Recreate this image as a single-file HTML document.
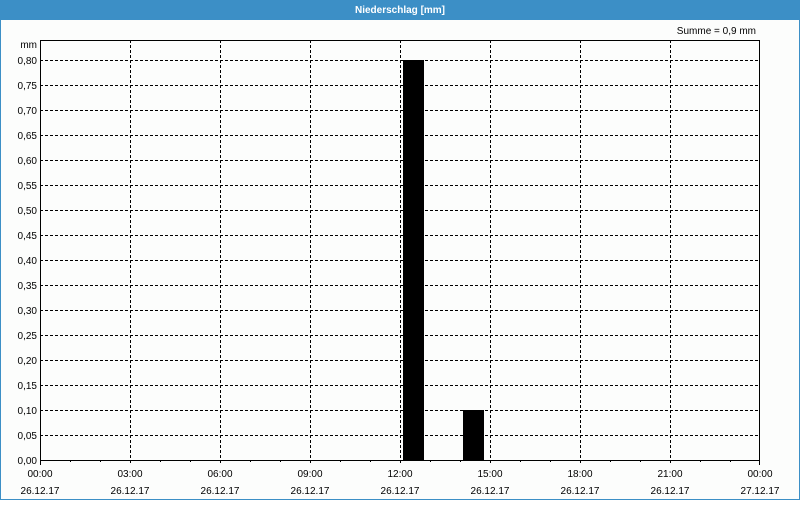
<!DOCTYPE html>
<html><head><style>
html,body{margin:0;padding:0;background:#fff;}
body{width:800px;height:500px;overflow:hidden;font-family:"Liberation Sans",sans-serif;}
</style></head><body>
<svg width="800" height="500" xmlns="http://www.w3.org/2000/svg" font-family="Liberation Sans, sans-serif" font-size="10">
<rect x="0" y="0" width="800" height="500" fill="#3c8fc6"/>
<rect x="1" y="20" width="798" height="479" fill="#fcfdfc"/>
<text x="400" y="13" fill="#fff" font-weight="bold" text-anchor="middle">Niederschlag [mm]</text>
<text x="756" y="34" fill="#000" text-anchor="end">Summe = 0,9 mm</text>
<text x="37" y="48" text-anchor="end">mm</text>
<g stroke="#000" stroke-dasharray="3,2" stroke-width="1">
<line x1="40" y1="60.5" x2="760" y2="60.5"/><line x1="40" y1="85.5" x2="760" y2="85.5"/><line x1="40" y1="110.5" x2="760" y2="110.5"/><line x1="40" y1="135.5" x2="760" y2="135.5"/><line x1="40" y1="160.5" x2="760" y2="160.5"/><line x1="40" y1="185.5" x2="760" y2="185.5"/><line x1="40" y1="210.5" x2="760" y2="210.5"/><line x1="40" y1="235.5" x2="760" y2="235.5"/><line x1="40" y1="260.5" x2="760" y2="260.5"/><line x1="40" y1="285.5" x2="760" y2="285.5"/><line x1="40" y1="310.5" x2="760" y2="310.5"/><line x1="40" y1="335.5" x2="760" y2="335.5"/><line x1="40" y1="360.5" x2="760" y2="360.5"/><line x1="40" y1="385.5" x2="760" y2="385.5"/><line x1="40" y1="410.5" x2="760" y2="410.5"/><line x1="40" y1="435.5" x2="760" y2="435.5"/>
<line x1="130.5" y1="40" x2="130.5" y2="465"/><line x1="220.5" y1="40" x2="220.5" y2="465"/><line x1="310.5" y1="40" x2="310.5" y2="465"/><line x1="400.5" y1="40" x2="400.5" y2="465"/><line x1="490.5" y1="40" x2="490.5" y2="465"/><line x1="580.5" y1="40" x2="580.5" y2="465"/><line x1="670.5" y1="40" x2="670.5" y2="465"/>
</g>
<rect x="40.5" y="40.5" width="719" height="420" fill="none" stroke="#000"/>
<g stroke="#000"><line x1="40.5" y1="460" x2="40.5" y2="465"/><line x1="759.5" y1="460" x2="759.5" y2="465"/>
<line x1="70.5" y1="460" x2="70.5" y2="462"/><line x1="100.5" y1="460" x2="100.5" y2="462"/><line x1="160.5" y1="460" x2="160.5" y2="462"/><line x1="190.5" y1="460" x2="190.5" y2="462"/><line x1="250.5" y1="460" x2="250.5" y2="462"/><line x1="280.5" y1="460" x2="280.5" y2="462"/><line x1="340.5" y1="460" x2="340.5" y2="462"/><line x1="370.5" y1="460" x2="370.5" y2="462"/><line x1="430.5" y1="460" x2="430.5" y2="462"/><line x1="460.5" y1="460" x2="460.5" y2="462"/><line x1="520.5" y1="460" x2="520.5" y2="462"/><line x1="550.5" y1="460" x2="550.5" y2="462"/><line x1="610.5" y1="460" x2="610.5" y2="462"/><line x1="640.5" y1="460" x2="640.5" y2="462"/><line x1="700.5" y1="460" x2="700.5" y2="462"/><line x1="730.5" y1="460" x2="730.5" y2="462"/></g>
<rect x="403" y="60" width="21" height="400" fill="#000"/>
<rect x="463" y="410" width="21" height="50" fill="#000"/>
<g text-anchor="end">
<text x="37" y="64">0,80</text><text x="37" y="89">0,75</text><text x="37" y="114">0,70</text><text x="37" y="139">0,65</text><text x="37" y="164">0,60</text><text x="37" y="189">0,55</text><text x="37" y="214">0,50</text><text x="37" y="239">0,45</text><text x="37" y="264">0,40</text><text x="37" y="289">0,35</text><text x="37" y="314">0,30</text><text x="37" y="339">0,25</text><text x="37" y="364">0,20</text><text x="37" y="389">0,15</text><text x="37" y="414">0,10</text><text x="37" y="439">0,05</text><text x="37" y="464">0,00</text>
</g>
<g text-anchor="middle">
<text x="40" y="477">00:00</text><text x="130" y="477">03:00</text><text x="220" y="477">06:00</text><text x="310" y="477">09:00</text><text x="400" y="477">12:00</text><text x="490" y="477">15:00</text><text x="580" y="477">18:00</text><text x="670" y="477">21:00</text><text x="760" y="477">00:00</text>
<text x="40" y="494">26.12.17</text><text x="130" y="494">26.12.17</text><text x="220" y="494">26.12.17</text><text x="310" y="494">26.12.17</text><text x="400" y="494">26.12.17</text><text x="490" y="494">26.12.17</text><text x="580" y="494">26.12.17</text><text x="670" y="494">26.12.17</text><text x="760" y="494">27.12.17</text>
</g>
</svg>
</body></html>
